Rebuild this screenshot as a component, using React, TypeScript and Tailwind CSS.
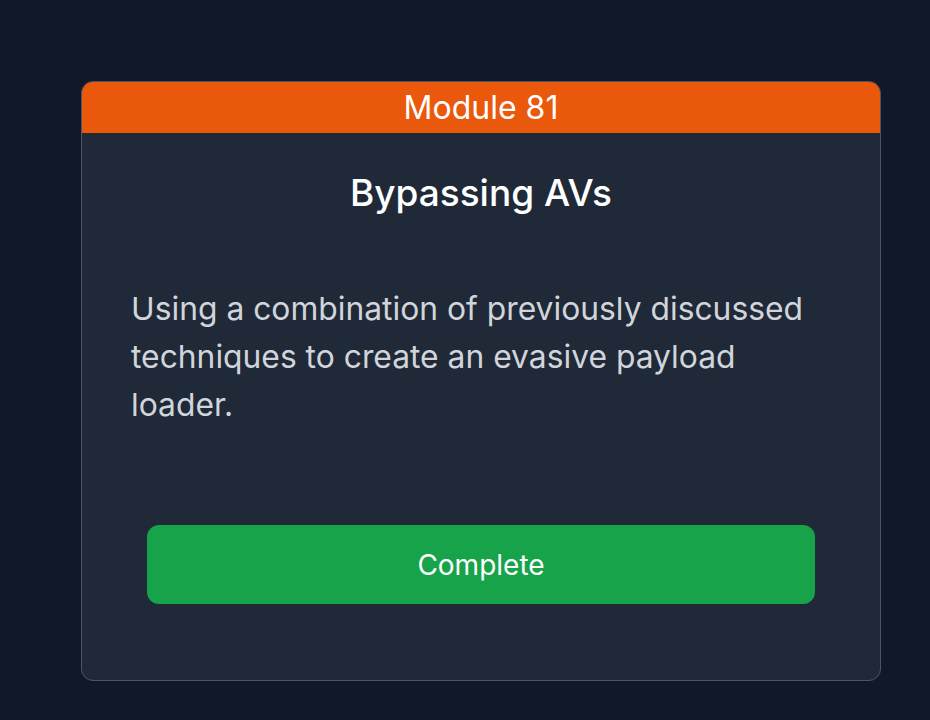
export default function App() {
  return (
    <div
      className="w-[930px] h-[720px] bg-[#111827] pl-[81px] pt-[81px]"
      style={{ fontFamily: "Inter, 'Noto Sans', sans-serif" }}
    >
      <div className="w-[800px] h-[600px] bg-[#1f2937] border border-[#4b5563] rounded-[12px] overflow-hidden flex flex-col">
        <div className="h-[51px] bg-[#ea580c] flex items-center justify-center text-white text-[32px] leading-[36px]">
          Module 81
        </div>
        <div className="mt-[40px] text-center text-white text-[37px] leading-[40px] font-medium">
          Bypassing AVs
        </div>
        <p className="mt-[72px] px-[49px] text-[#d1d5db] text-[31.8px] leading-[48px]">
          Using a combination of previously discussed techniques to create an evasive payload loader.
        </p>
        <div className="mt-[96px] px-[65px]">
          <button className="w-full h-[79px] rounded-[12px] bg-[#16a34a] text-white text-[28px] font-normal">
            Complete
          </button>
        </div>
      </div>
    </div>
  );
}
